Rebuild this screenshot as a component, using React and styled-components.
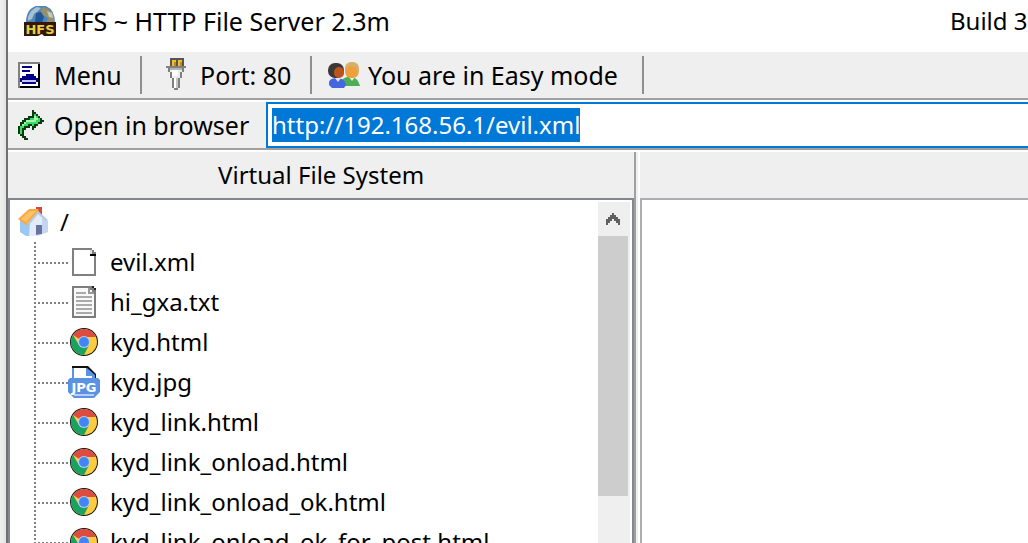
import React, { useEffect, useRef } from 'react'
import styled, { createGlobalStyle, css } from 'styled-components'

const GlobalStyle = createGlobalStyle`
  * {
    box-sizing: border-box;
  }

  html,
  body,
  #root {
    height: 100%;
    margin: 0;
  }

  body {
    overflow: hidden;
    background: #ececec;
    color: #000;
    font-family: 'Noto Sans', 'Open Sans', sans-serif;
    font-size: 24px;
    line-height: 32px;
  }
`

const Desktop = styled.div`
  height: 100%;
  padding-left: 6px;
  background: linear-gradient(to right, #f0f0f0 0, #e2e2e2 6px);
`

const Window = styled.div`
  display: flex;
  flex-direction: column;
  height: 100%;
  border-left: 2px solid #707070;
  background: #fff;
`

const TitleBar = styled.header`
  display: flex;
  flex: none;
  align-items: center;
  height: 50px;
  padding: 0 0 8px 16px;
  overflow: hidden;
  white-space: nowrap;
`

const Title = styled.h1`
  flex: 1;
  margin: 0 0 0 6px;
  font-size: 25px;
  font-weight: 400;
`

const Build = styled.span`
  flex: none;
  width: 78px;
`

const Bar = styled.div`
  display: flex;
  flex: none;
  align-items: center;
  height: 50px;
  padding-top: 2px;
  border-bottom: 2px solid #a0a0a0;
  box-shadow: inset 0 2px #fff;
  background: #efefef;
  white-space: nowrap;
`

const ToolButton = styled.button`
  display: flex;
  flex: none;
  align-items: center;
  gap: ${props => props.$gap || 12}px;
  width: ${props => props.$width}px;
  height: 38px;
  padding: 0 0 0 ${props => props.$indent || 10}px;
  border: 0;
  background: none;
  color: inherit;
  font: inherit;
  font-size: 25px;
  text-align: left;

  ${props =>
    props.$divided &&
    css`
      border-right: 2px solid #8f8f8f;
    `}
`

const Address = styled.input`
  flex: 1;
  min-width: 0;
  align-self: stretch;
  padding: 4px;
  border: 2px solid #0078d7;
  border-right: 0;
  border-radius: 0;
  outline: none;
  background: #fff;
  font: inherit;
  line-height: 34px;

  &::selection {
    background: #0078d7;
    color: #fff;
  }
`

const Panes = styled.main`
  display: flex;
  flex: 1;
  min-height: 0;
  border-top: 2px solid #fff;
`

const Pane = styled.section`
  display: flex;
  flex-direction: column;
  min-width: 0;
  flex: ${props => props.$flex};
`

const PaneTitle = styled.h2`
  flex: none;
  height: 46px;
  margin: 0;
  background: #efefef;
  font-size: 24px;
  font-weight: 400;
  line-height: 46px;
  text-align: center;
`

const TreeBox = styled.div`
  display: flex;
  flex: 1;
  min-height: 0;
  padding: 2px 2px 0 0;
  border: 2px solid #828790;
  border-bottom: 0;
`

const LogBox = styled.div`
  flex: 1;
  border: 2px solid #abadb3;
  border-width: 2px 0 0 2px;
`

const Splitter = styled.div`
  flex: none;
  width: 6px;
  border-left: 2px solid #a0a0a0;
  border-right: 2px solid #fff;
  background: #efefef;
`

const Tree = styled.div`
  flex: 1;
  min-width: 0;
  overflow: hidden;
  white-space: nowrap;
`

const Root = styled.div`
  display: flex;
  align-items: center;
  gap: 10px;
  height: 40px;
  padding-left: 8px;
`

const Files = styled.ul`
  margin: 0;
  padding: 0 0 0 24px;
  list-style: none;
`

const File = styled.li`
  display: flex;
  align-items: center;
  gap: 10px;
  height: 40px;
`

const Branch = styled.span`
  flex: none;
  align-self: stretch;
  width: 34px;
  margin-right: -10px;
  background:
    repeating-linear-gradient(to bottom, #808080 0 2px, transparent 2px 4px) 0 0 / 2px 100%
      no-repeat,
    repeating-linear-gradient(to right, #808080 0 2px, transparent 2px 4px) 0 20px / 100% 2px
      no-repeat;
`

const ScrollBar = styled.div`
  flex: none;
  width: 32px;
  background: #efefef;
`

const ScrollUp = styled.button`
  display: flex;
  align-items: center;
  justify-content: center;
  width: 30px;
  height: 34px;
  padding: 0;
  border: 0;
  background: none;
`

const Thumb = styled.div`
  width: 30px;
  height: 260px;
  background: #cdcdcd;
`

const Icon = styled.svg`
  display: block;
  flex: none;
`

const AppIcon = () => (
  <Icon width="32" height="32" viewBox="0 0 32 32" aria-hidden="true">
    <path d="M2 18Q2 4 12 1H22Q31 5 31 18Z" fill="#4d86bd" />
    <path d="M4 12Q7 4 13 2L17 3L13 7L10 9L8 14L4 16Z" fill="#a9c0d0" />
    <path d="M19 2Q27 3 30 12V18H22L24 13L19 10L16 6Z" fill="#93906f" />
    <path d="M23 6L28 8L29 13L25 12Z" fill="#c5c9bc" />
    <path d="M12 8L17 7L20 12L18 18H11Z" fill="#1f5796" />
    <path d="M0 17H32V31H20L18 29L14 31H0Z" fill="#33180a" />
    <text
      x="16"
      y="29"
      fill="#e8d040"
      fontFamily="DejaVu Sans, sans-serif"
      fontSize="13"
      fontWeight="700"
      textAnchor="middle"
    >
      HFS
    </text>
  </Icon>
)

const MenuIcon = () => (
  <Icon width="24" height="26" viewBox="0 0 24 26" shapeRendering="crispEdges" aria-hidden="true">
    <path d="M0 0H22V26H0Z" fill="#000" />
    <path d="M0 0H22V2H2V26H0Z" fill="#808080" />
    <path d="M2 2H20V24H2Z" fill="#fff" />
    <path
      d="M4 4H14V6H4Z M4 8H12V10H4Z M8 12H16V14H18V16H20V20H18V22H4V20H2V16H4V14H8Z"
      fill="#000084"
    />
    <path d="M4 18H18V20H4Z" fill="#c8c8e8" />
  </Icon>
)

const PlugIcon = () => (
  <Icon width="24" height="34" viewBox="0 0 24 34" shapeRendering="crispEdges" aria-hidden="true">
    <path d="M6 0H20V8H22V10H20V14H18V20H16V30H14V32H10V30H8V20H6V14H4V10H2V8H6Z" fill="#808080" />
    <path d="M6 0H20V8H6Z" fill="#555" />
    <path d="M8 2H12V8H8Z M14 2H18V8H14Z" fill="#f5bc28" />
    <path d="M10 4H12V8H10Z M16 4H18V8H16Z" fill="#b98a20" />
    <path d="M6 10H18V12H6Z" fill="#b4b4b4" />
    <path d="M6 12H18V14H16V20H8V14H6Z" fill="#ececec" />
    <path d="M8 12H14V18H8Z" fill="#fff" />
    <path d="M10 20H12V30H10Z" fill="#fff" />
    <path d="M12 20H14V30H12Z" fill="#c4c4c4" />
  </Icon>
)

const UsersIcon = () => (
  <Icon width="32" height="28" viewBox="0 0 32 28" aria-hidden="true">
    <path d="M14 25V19Q18 15 24 16Q30 17 32 25Z" fill="#4fae55" />
    <path d="M21 16L24 20L27 16Z" fill="#e5f5e2" />
    <rect x="17" y="1" width="14" height="16" rx="6" fill="#d5b26c" />
    <rect x="18" y="5" width="11" height="12" rx="5" fill="#f0a03a" />
    <path d="M1 24V21Q2 17 9 17Q17 17 18 24L16 27H4Z" fill="#4666e0" />
    <path d="M7 17L10 21L13 17Z" fill="#dfe8ff" />
    <rect x="0" y="2" width="16" height="15" rx="7" fill="#3c3838" />
    <rect x="6" y="6" width="10" height="11" rx="5" fill="#bc5420" />
  </Icon>
)

const ArrowIcon = () => (
  <Icon width="26" height="30" viewBox="0 0 26 30" shapeRendering="crispEdges" aria-hidden="true">
    <path
      d="M14 0H16V2H18V4H20V6H22V8H24V10H26V12H24V14H20V16H18V18H16V20H14V16H12V18H8V20H6V26H8V28H10V30H6V28H4V26H2V24H0V16H2V12H4V10H6V8H10V6H14Z"
      fill="#0c3b12"
    />
    <path
      d="M16 4H18V6H20V8H22V12H20V14H16V16H14V14H10V16H6V18H4V24H2V16H4V14H6V12H8V10H12V8H16Z"
      fill="#35dd66"
    />
    <path d="M16 6H18V8H20V10H8V12H6V14H4V16H6V14H8V12H18V10H16Z" fill="#a5f5ae" />
  </Icon>
)

const HomeIcon = () => (
  <Icon width="32" height="32" viewBox="0 0 32 32" aria-hidden="true">
    <path d="M2 14L12 18V30L8 30L2 26Z" fill="#9bc8f0" />
    <path d="M12 17L20 6L30 15V26L20 30H11Z" fill="#e2ebf8" />
    <path d="M24 12L30 15V26L24 28Z" fill="#c3d5ef" />
    <path d="M18 1H24V10L18 5Z" fill="#d04a40" />
    <path d="M0 13L11 3L20 3L21 6L11 18L8 19Z" fill="#fbaa43" />
    <path d="M3 13L12 5L18 5L8 16Z" fill="#ffc267" />
    <path d="M20 5L30 14L28 15L20 8L12 18L9 18Z" fill="#b9c8e2" />
    <path d="M18 19H24V28L18 29Z" fill="#66749f" />
  </Icon>
)

const BlankIcon = () => (
  <Icon width="32" height="32" viewBox="0 0 32 32" shapeRendering="crispEdges" aria-hidden="true">
    <path d="M5 3H23V5H25V7H27V29H5Z" fill="#fff" stroke="#808080" strokeWidth="2" />
    <path d="M22 4H24V8H22Z" fill="#ddd" />
    <path d="M22 8H28V10H22Z" fill="#000" />
  </Icon>
)

const TextIcon = () => (
  <Icon width="32" height="32" viewBox="0 0 32 32" shapeRendering="crispEdges" aria-hidden="true">
    <path d="M5 1H23V3H25V5H27V31H5Z" fill="#f8f8f8" stroke="#7d7d7d" strokeWidth="2" />
    <path d="M20 2H22V6H26V8H20Z" fill="#999" />
    <path d="M24 0H26V2H28V4H26V2H24Z" fill="#222" />
    <path
      d="M8 6H18V8H8Z M8 10H24V12H8Z M8 14H24V16H8Z M8 18H24V20H8Z M8 22H24V24H8Z M8 26H24V28H8Z"
      fill="#aaa"
    />
  </Icon>
)

const ChromeIcon = () => (
  <Icon width="32" height="32" viewBox="0 0 32 32" aria-hidden="true">
    <circle cx="16" cy="16" r="14" fill="#111" />
    <circle cx="16" cy="16" r="13" fill="#fccc3f" />
    <path d="M16 16L5 9A13 13 0 0 1 27 9L28 11H16Z" fill="#dc4c40" />
    <path d="M5 9A13 13 0 0 0 16 29L21 19L11 19Z" fill="#1ba261" />
    <circle cx="16" cy="16" r="6" fill="#b9d0f5" />
    <circle cx="16" cy="16" r="5" fill="#4285f4" />
  </Icon>
)

const JpgIcon = () => (
  <Icon width="32" height="32" viewBox="0 0 32 32" aria-hidden="true">
    <path d="M4 0H20L28 8V14H4Z" fill="#111" />
    <path d="M4 2H19L27 9V14H4Z" fill="#5b92e3" />
    <path d="M6 2H18V10H24V14H6Z" fill="#fff" />
    <path d="M2 12H30L32 14V26L30 28L26 32H6L2 28L0 26V14Z" fill="#5b92e3" />
    <path d="M6 28H26V30H6Z" fill="#b5cff5" />
    <text
      x="16"
      y="26"
      fill="#fff"
      fontFamily="DejaVu Sans, sans-serif"
      fontSize="13"
      fontWeight="700"
      textAnchor="middle"
    >
      JPG
    </text>
  </Icon>
)

const UpIcon = () => (
  <Icon width="14" height="12" viewBox="0 0 14 12" shapeRendering="crispEdges" aria-hidden="true">
    <path
      d="M6 0H8V2H10V4H12V6H14V12H12V10H10V8H8V6H6V8H4V10H2V12H0V6H2V4H4V2H6Z"
      fill="#606060"
    />
  </Icon>
)

const files = [
  { name: 'evil.xml', icon: BlankIcon },
  { name: 'hi_gxa.txt', icon: TextIcon },
  { name: 'kyd.html', icon: ChromeIcon },
  { name: 'kyd.jpg', icon: JpgIcon },
  { name: 'kyd_link.html', icon: ChromeIcon },
  { name: 'kyd_link_onload.html', icon: ChromeIcon },
  { name: 'kyd_link_onload_ok.html', icon: ChromeIcon },
  { name: 'kyd_link_onload_ok_for_post.html', icon: ChromeIcon },
]

const App = () => {
  const address = useRef(null)

  useEffect(() => {
    address.current.focus()
    address.current.select()
  }, [])

  return (
    <Desktop>
      <GlobalStyle />
      <Window>
        <TitleBar>
          <AppIcon />
          <Title>HFS ~ HTTP File Server 2.3m</Title>
          <Build>Build 3</Build>
        </TitleBar>

        <Bar>
          <ToolButton $width={134} $divided>
            <MenuIcon />
            Menu
          </ToolButton>
          <ToolButton $width={170} $indent={22} $divided>
            <PlugIcon />
            Port: 80
          </ToolButton>
          <ToolButton $width={332} $indent={16} $gap={8} $divided>
            <UsersIcon />
            You are in Easy mode
          </ToolButton>
        </Bar>

        <Bar>
          <ToolButton $width={258} $gap={10}>
            <ArrowIcon />
            Open in browser
          </ToolButton>
          <Address
            ref={address}
            aria-label="Address"
            spellCheck={false}
            defaultValue="http://192.168.56.1/evil.xml"
          />
        </Bar>

        <Panes>
          <Pane $flex="0 0 61.4%">
            <PaneTitle>Virtual File System</PaneTitle>
            <TreeBox>
              <Tree>
                <Root>
                  <HomeIcon />
                  /
                </Root>
                <Files>
                  {files.map(({ name, icon: FileIcon }) => (
                    <File key={name}>
                      <Branch />
                      <FileIcon />
                      {name}
                    </File>
                  ))}
                </Files>
              </Tree>
              <ScrollBar>
                <ScrollUp aria-label="Scroll up">
                  <UpIcon />
                </ScrollUp>
                <Thumb />
              </ScrollBar>
            </TreeBox>
          </Pane>
          <Splitter />
          <Pane $flex="1">
            <PaneTitle />
            <LogBox />
          </Pane>
        </Panes>
      </Window>
    </Desktop>
  )
}

export default App
